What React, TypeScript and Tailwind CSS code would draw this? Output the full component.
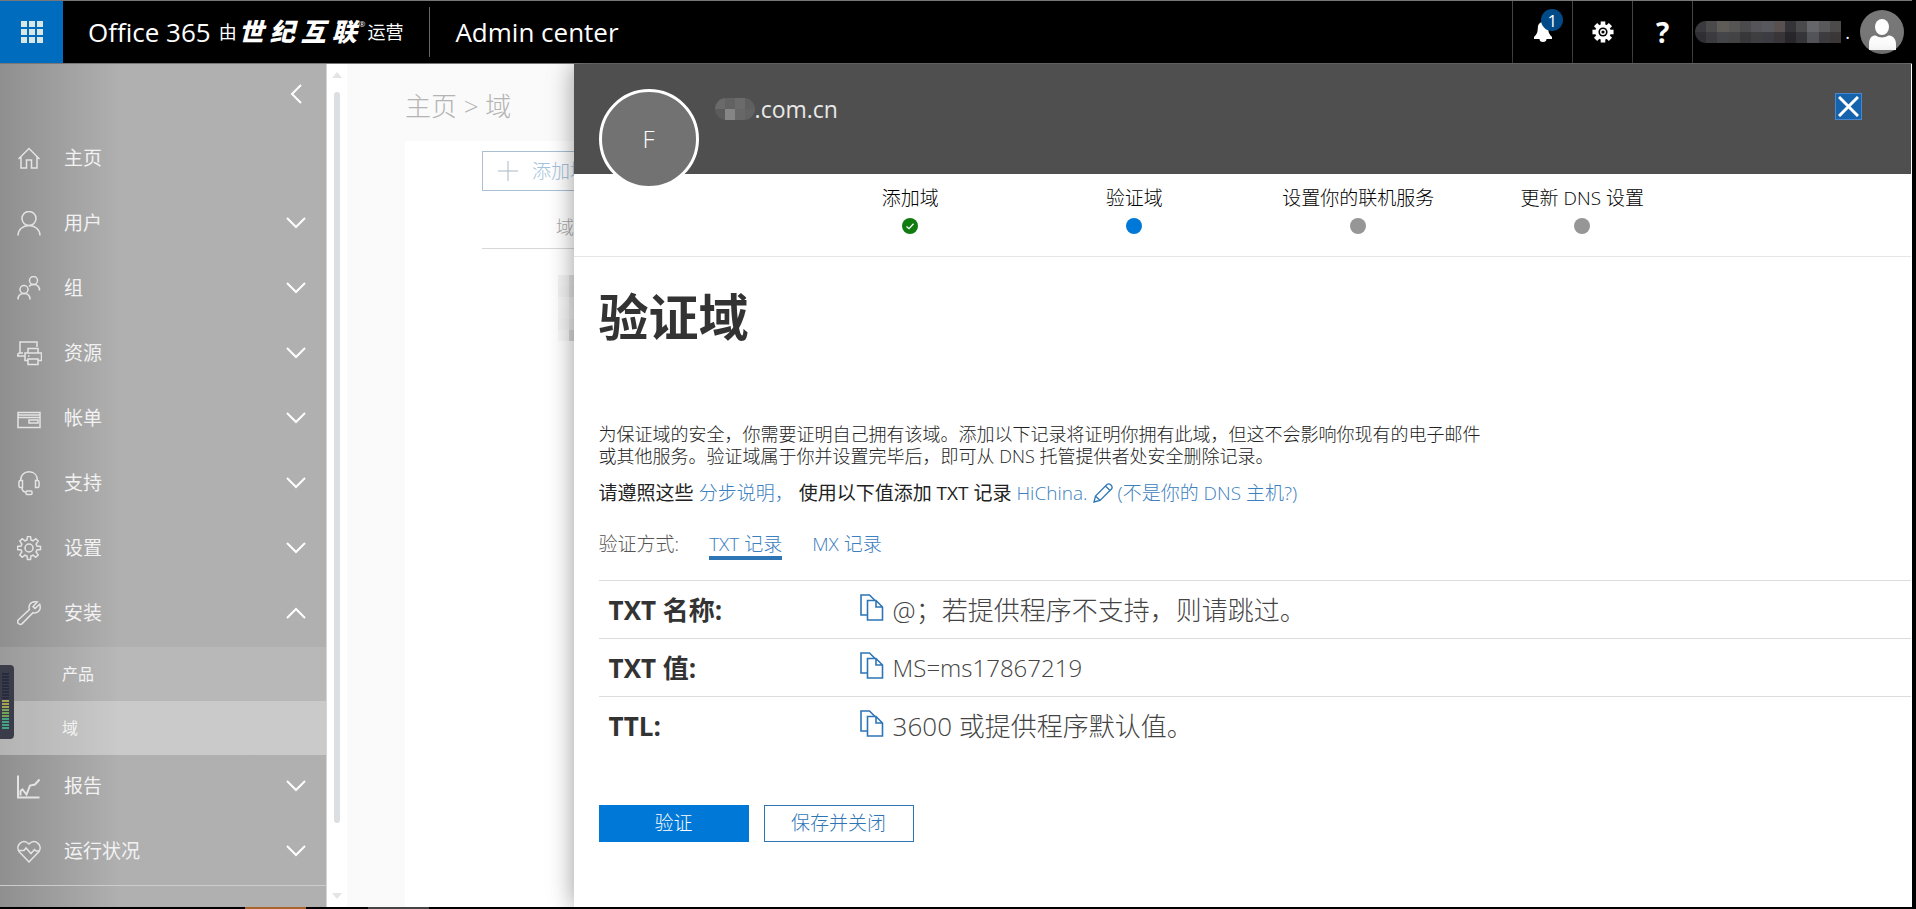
import type { ReactNode } from "react";
import { clsx } from "clsx";

type NavItem = {
  label: string;
  icon: ReactNode;
  expandable?: boolean;
  children?: { label: string; active?: boolean }[];
};

const navItems: NavItem[] = [
  {
    label: "主页",
    icon: <path d="M1.5 13 12 2.5 22.5 13M4 11v11h5.500v-8h5v8H20V11" />,
  },
  {
    label: "用户",
    expandable: true,
    icon: (
      <>
        <circle cx="12" cy="7.500" r="7" />
        <path d="M1 24.500c0-6 5-10 11-10s11 4 11 10" />
      </>
    ),
  },
  {
    label: "组",
    expandable: true,
    icon: (
      <>
        <circle cx="16.500" cy="4.500" r="4" />
        <circle cx="7" cy="13.500" r="4" />
        <path d="M1 23.500c0-4 2.500-6 6-6s6 2 6 6M12 10.500c1-1.500 2.500-2 4.500-2 3.500 0 6 2 6 6" />
      </>
    ),
  },
  {
    label: "资源",
    expandable: true,
    icon: (
      <>
        <path d="M3 12V1h17v5M8 15H0.500c0-2 1-3 2.500-3h3" />
        <path d="M11 12V7.500h10V12M11 19.500H8V12h16.500v7.500H21" />
        <path d="M11 18h10v5.500H11zM11 15h1.500" />
      </>
    ),
  },
  {
    label: "帐单",
    expandable: true,
    icon: <path d="M1 6.500h22v15H1zM1 9h22M1 11.500h22M12 14h9v3h-9z" />,
  },
  {
    label: "支持",
    expandable: true,
    icon: (
      <>
        <path d="M3.500 10C3.500 4 7 0.800 12 0.800S20.500 4 20.500 10M18.500 9.500H21c1.500 0 1.500 7 0 7h-2.500zM5.500 9.500H3c-1.500 0-1.500 7 0 7h2.500zM5 16.500c0 3 1.500 4.500 4 4.500" />
        <rect x="9" y="20" width="6" height="3.500" rx="1" />
      </>
    ),
  },
  {
    label: "设置",
    expandable: true,
    icon: (
      <>
        <path d="m10 4 .5-3.500h3L14 4l2 .8 2.800-2.100 2.400 2.400L19.100 8l.8 2 3.600.5v3l-3.600.5-.8 2 2.100 2.900-2.400 2.400L16 19.200l-2 .8-.5 3.500h-3L10 20l-2-.8-2.800 2.100-2.400-2.400L4.900 16l-.8-2-3.600-.5v-3l3.600-.5.8-2-2.100-2.900 2.400-2.400L8 4.800z" />
        <circle cx="12" cy="12" r="4" />
      </>
    ),
  },
  {
    label: "安装",
    expandable: true,
    icon: (
      <path d="M22.700 3.200 18 7.500 16 5.800 20.300 1C17 .2 12.500 1 12 6c0 1 .1 1.800.4 2.500L1.500 18.800c-2.400 2.700 1 6 3.700 3.800L16 11.700c1 .3 2 .3 3 .1 4-.8 5-5 3.700-8.600z" />
    ),
    children: [{ label: "产品" }, { label: "域", active: true }],
  },
  {
    label: "报告",
    expandable: true,
    icon: <path d="M1 1.500v22h21.500M3.500 21.500V17l2-1.500 4 5 3.500-9 5-1 4.500-5" strokeWidth="2" />,
  },
  {
    label: "运行状况",
    expandable: true,
    icon: (
      <>
        <path d="M12 23 22 12.500C26 6 18 -1 12 5 6-1-2 6 2 12.500z" />
        <path d="M1.500 11.500H7L9 9l5 5.500 3.500-4 1.500 1.500h3.500" />
      </>
    ),
  },
];

const steps = [
  { label: "添加域", state: "done" },
  { label: "验证域", state: "current" },
  { label: "设置你的联机服务", state: "todo" },
  { label: "更新 DNS 设置", state: "todo" },
];

const records = [
  { name: "TXT 名称:", value: "@；若提供程序不支持，则请跳过。" },
  { name: "TXT 值:", value: "MS=ms17867219", code: true },
  { name: "TTL:", value: "3600 或提供程序默认值。" },
];

const accountTiles = [
  ["#3a3a3e", "#4a4a4a", "#5f5c58", "#565554", "#4b4b4d", "#545459", "#57585d", "#585150", "#343337", "#4a4a4d", "#64666a", "#59595c", "#4d4a4a"],
  ["#303034", "#3c3c40", "#454649", "#444444", "#38383a", "#3f3f41", "#3c3c42", "#393539", "#28262b", "#35353a", "#52545a", "#3d3d40", "#3c3838"],
];

const domainTiles = [
  ["#6a6a6a", "#626262", "#6b6b6b", "#5f5f5f"],
  ["#5b5b5b", "#858585", "#676767", "#626262"],
];

const rowTiles = [
  ["#f4f4f4", "#e4e4e4"],
  ["#f2f2f2", "#e2e2e2"],
  ["#f7f7f7", "#ededed"],
  ["#f6f6f6", "#eeeeee"],
  ["#f4f4f4", "#e9e9e9"],
  ["#f8f8f8", "#d8d8d8"],
];

export default function App() {
  return (
    <div className="flex h-screen flex-col overflow-hidden bg-black pr-1 font-['Open_Sans','Noto_Sans_CJK_SC',sans-serif]">
      <TopBar />
      <div className="relative flex min-h-0 flex-1 bg-[#fafafa]">
        <Sidebar />
        <ScrollTrack />
        <DomainList />
        <DomainPanel />
        <LevelMeter />
      </div>
      {/* taskbar edge */}
      <div className="flex h-[2px] shrink-0">
        <div className="ml-[245px] w-[61px] bg-[#a8642a]" />
        <div className="ml-[62px] w-[61px] bg-[#444]" />
      </div>
    </div>
  );
}

function TopBar() {
  return (
    <header className="flex h-16 shrink-0 items-stretch border-y border-[#777] bg-black text-white">
      <button type="button" aria-label="应用启动器" className="flex w-[63px] items-center justify-center bg-[#006cbe]">
        <svg viewBox="0 0 22 22" className="h-[22px] w-[22px] fill-[#d8e6e6]">
          {[0, 8, 16].map((y) =>
            [0, 8, 16].map((x) => <rect key={`${x}-${y}`} x={x} y={y} width="6" height="6" />)
          )}
        </svg>
      </button>
      <div className="flex items-center pl-[25px]">
        <span className="text-[26px]">Office 365</span>
        <span className="ml-2 text-[18px]">由</span>
        <span className="ml-[2px] flex gap-[6px] text-[25px] font-black italic">
          {["世", "纪", "互", "联"].map((c) => (
            <span key={c}>{c}</span>
          ))}
        </span>
        <span className="mb-4 ml-[2px] text-[8px]">®</span>
        <span className="ml-[2px] text-[18px]">运营</span>
      </div>
      <div className="my-[6px] ml-[26px] w-px bg-[#666]" />
      <span className="flex items-center pl-[25px] text-[26px]">Admin center</span>

      <div className="ml-auto flex">
        <button type="button" aria-label="通知" className="relative flex w-[60px] items-center justify-center border-l border-[#444]">
          <svg viewBox="0 0 18 20" className="h-5 w-[18px] fill-white">
            <path d="M9 0C5.500 0 4 2.500 3.800 6 3.600 11 2.500 12.500 0 15v2h18v-2c-2.500-2.500-3.600-4-3.800-9C14 2.500 12.500 0 9 0zM5.500 17a3.500 3 0 0 0 7 0z" />
          </svg>
          <span className="absolute top-2 right-[9px] flex h-[22px] w-[22px] items-center justify-center rounded-full bg-[#004b87] text-[17px] leading-none">
            1
          </span>
        </button>
        <button type="button" aria-label="设置" className="flex w-[60px] items-center justify-center border-l border-[#444]">
          <svg viewBox="0 0 24 24" className="h-[22px] w-[22px]">
            <g className="fill-white">
              {[0, 45, 90, 135].map((a) => (
                <rect key={a} x="9.500" y="0.500" width="5" height="23" transform={`rotate(${a} 12 12)`} />
              ))}
              <circle cx="12" cy="12" r="8.500" />
            </g>
            <circle cx="12" cy="12" r="5" fill="#000" />
            <circle cx="12" cy="12" r="2.500" fill="none" stroke="#fff" strokeWidth="1.500" />
          </svg>
        </button>
        <button type="button" aria-label="帮助" className="flex w-[60px] items-center justify-center border-l border-[#444] text-[28px] font-bold">
          ?
        </button>
        <button type="button" aria-label="帐户" className="flex items-center border-l border-[#444] pr-2 pl-[2px]">
          <span className="overflow-hidden rounded-l-full">
            <Tiles rows={accountTiles} className="h-[22px] w-[146px]" />
          </span>
          <span className="ml-1 text-[18px]">.</span>
          <svg viewBox="0 0 44 44" className="ml-[10px] h-[44px] w-[44px]">
            <circle cx="22" cy="22" r="22" fill="#777" />
            <ellipse cx="22" cy="17" rx="7" ry="8" fill="#fff" />
            <path d="M9 40V34c0-6 3-8.500 6.500-8.500 4 2.500 9 2.500 13 0C32 25.500 36 28 36 34v6z" fill="#fff" />
          </svg>
        </button>
      </div>
    </header>
  );
}

function Sidebar() {
  return (
    <nav className="w-[327px] shrink-0 overflow-hidden border-r border-[#d4d4d4] bg-[#b0b0b0] bg-linear-to-r from-[#8f8f8f] to-[#b0b0b0] to-[120px] text-[19px] text-[#f2f2f2]">
      <div className="flex h-[63px] justify-end pt-5 pr-6">
        <button type="button" aria-label="折叠导航" className="h-5 w-3">
          <svg viewBox="0 0 12 20" className="h-5 w-3 fill-none stroke-white stroke-2">
            <path d="M11 1 2 10l9 9" />
          </svg>
        </button>
      </div>
      <ul>
        {navItems.map((item) => (
          <li key={item.label}>
            <a href="#" className="flex h-[65px] items-center pr-5 pb-[3px] pl-[17px]">
              <svg viewBox="0 0 25 25" className="h-[25px] w-[25px] fill-none stroke-[#e4e4e4] stroke-[1.5px]">
                {item.icon}
              </svg>
              <span className="ml-[22px] flex-1">{item.label}</span>
              {item.expandable && <Chevron up={Boolean(item.children)} />}
            </a>
            {item.children && (
              <ul className="bg-white/10 text-[16px]">
                {item.children.map((child) => (
                  <li key={child.label}>
                    <a
                      href="#"
                      className={clsx("flex h-[54px] items-center pl-[62px]", child.active && "bg-white/25")}
                    >
                      {child.label}
                    </a>
                  </li>
                ))}
              </ul>
            )}
          </li>
        ))}
      </ul>
      <a href="#" className="flex border-t border-[#ccc] pt-[18px] pl-16">
        管理中心
      </a>
    </nav>
  );
}

function Chevron({ up }: { up: boolean }) {
  return (
    <svg viewBox="0 0 20 12" className={clsx("h-3 w-5 fill-none stroke-white stroke-2", up && "rotate-180")}>
      <path d="m1 1 9 9 9-9" />
    </svg>
  );
}

function ScrollTrack() {
  return (
    <div className="flex w-5 shrink-0 flex-col items-center bg-white pt-2 pb-2">
      <svg viewBox="0 0 10 6" className="h-[6px] w-[10px] fill-[#e4e4e4]">
        <path d="M5 0 10 6H0z" />
      </svg>
      <div className="mt-[14px] mb-[70px] w-[6px] flex-1 rounded-full bg-[#dbdfe2]" />
      <svg viewBox="0 0 10 6" className="h-[6px] w-[10px] fill-[#e4e4e4]">
        <path d="M5 6 0 0h10z" />
      </svg>
    </div>
  );
}

function DomainList() {
  return (
    <main className="flex min-w-0 flex-1 flex-col pl-[58px]">
      <p className="flex h-[77px] items-center pt-2 text-[26px] font-light text-[#b4b4b4]">主页 &gt; 域</p>
      <div className="flex-1 bg-white pt-[10px] pl-[77px]">
        <button type="button" className="flex h-10 w-[140px] items-center border border-[#a9bfd3] pl-[15px] text-[19px] font-light whitespace-nowrap text-[#a5c2dc]">
          <svg viewBox="0 0 20 20" className="mr-[14px] h-5 w-5 shrink-0 fill-none stroke-[#a9b9c6]">
            <path d="M10 0v20M0 10h20" />
          </svg>
          添加域
        </button>
        <p className="flex h-[58px] items-center border-b border-[#d8d8d8] pt-4 pl-[74px] text-[18px] font-light text-[#aaa]">
          域
        </p>
        <div className="mt-[26px] ml-[76px] w-[22px]">
          <Tiles rows={rowTiles} className="h-[66px] w-[22px]" />
        </div>
      </div>
    </main>
  );
}

function DomainPanel() {
  return (
    <section className="absolute inset-y-0 right-0 w-[70%] border-r border-white bg-white text-[#222] shadow-[0_0_24px_rgba(0,0,0,0.4)]">
      <div className="flex h-[110px] items-start bg-[#4f4f4f] pl-[25px] text-white">
        <div className="mt-[25px] flex h-[100px] w-[100px] items-center justify-center rounded-full border-3 border-white bg-[#727272] text-[24px] font-light">
          F
        </div>
        <div className="mt-7 ml-4 flex items-center">
          <span className="overflow-hidden rounded-full">
            <Tiles rows={domainTiles} className="h-[22px] w-10" />
          </span>
          <span className="text-[23px] leading-[34px] text-[#e8e8e8]">.com.cn</span>
        </div>
        <button
          type="button"
          aria-label="关闭"
          className="mt-[29px] mr-[49px] ml-auto flex h-[27px] w-[27px] items-center justify-center border border-[#4a86d0] bg-[#1663ad]"
        >
          <svg viewBox="0 0 21 21" className="h-[21px] w-[21px] fill-none stroke-white stroke-3">
            <path d="m1 1 19 19M20 1 1 20" />
          </svg>
        </button>
      </div>

      <ol className="flex justify-center border-b border-[#e6e6e6] pt-3 pb-[22px] pl-2">
        {steps.map((step) => (
          <li key={step.label} className="flex w-56 flex-col items-center gap-2 text-[19px] leading-6 font-light text-black">
            {step.label}
            <StepDot state={step.state} />
          </li>
        ))}
      </ol>

      <div className="pt-[30px] pl-[25px]">
        <h1 className="text-[50px] leading-[60px] font-bold text-[#333]">验证域</h1>
        <p className="mt-[76px] text-[18px] leading-[22px] font-light">
          为保证域的安全，你需要证明自己拥有该域。添加以下记录将证明你拥有此域，但这不会影响你现有的电子邮件
          <br />
          或其他服务。验证域属于你并设置完毕后，即可从 DNS 托管提供者处安全删除记录。
        </p>
        <p className="mt-[14px] flex items-center text-[19px] leading-6 font-light text-[#3c80be]">
          <b className="text-[#222]">请遵照这些</b>
          <a href="#" className="ml-[5px]">分步说明，</a>
          <b className="ml-[5px] text-[#222]">使用以下值添加 TXT 记录</b>
          <a href="#" className="ml-[5px]">HiChina.</a>
          <button type="button" aria-label="编辑" className="ml-[5px]">
            <svg viewBox="0 0 20 20" className="h-5 w-5 fill-none stroke-[#2e75b6] stroke-[1.3px]">
              <path d="m1 19 1.500-6L14 1.500c2.500-2 6.500 2 4.500 4.500L7 17.500zM12.500 3l4.500 4.500M2.500 13 7 17.500" />
            </svg>
          </button>
          <a href="#" className="ml-[5px]">(不是你的 DNS 主机?)</a>
        </p>

        <div className="mt-[27px] flex items-start text-[19px] leading-6 font-light">
          <span className="text-[#555]">验证方式:</span>
          <button type="button" className="ml-[30px] border-b-4 border-[#2e75b6] text-[#3c80be]">TXT 记录</button>
          <button type="button" className="ml-[30px] text-[#3c80be]">MX 记录</button>
        </div>

        <table className="mt-5 w-full text-left text-[26px]">
          <tbody>
            {records.map((r) => (
              <tr key={r.name} className="h-[58px] border-t border-[#ddd]">
                <th scope="row" className="w-[261px] pl-[10px] leading-8 font-bold text-[#333]">{r.name}</th>
                <td className="leading-8 font-light text-[#444]">
                  <div className="flex items-center gap-[9px]">
                    <button type="button" aria-label="复制" className="mb-1">
                      <CopyIcon />
                    </button>
                    <span className={clsx(r.code && "text-[24px]")}>{r.value}</span>
                  </div>
                </td>
              </tr>
            ))}
          </tbody>
        </table>

        <div className="mt-[50px] flex gap-[15px] text-[19px] font-light">
          <button type="button" className="h-[37px] w-[150px] bg-[#0078d7] text-white">验证</button>
          <button type="button" className="h-[37px] w-[150px] border border-[#2e75b6] text-[#2e75b6]">保存并关闭</button>
        </div>
      </div>
    </section>
  );
}

function StepDot({ state }: { state: string }) {
  return (
    <svg viewBox="0 0 16 16" className="h-4 w-4">
      <circle
        cx="8"
        cy="8"
        r="8"
        className={clsx(
          state === "done" && "fill-[#107c10]",
          state === "current" && "fill-[#0078d7]",
          state === "todo" && "fill-[#969696]"
        )}
      />
      {state === "done" && <path d="m4.500 8.500 2.500 2.200 4.500-5" fill="none" stroke="#fff" strokeWidth="1.300" />}
    </svg>
  );
}

function CopyIcon() {
  return (
    <svg viewBox="0 0 24 27" className="h-[27px] w-6 fill-none stroke-[#2e75b6] stroke-[1.6px]">
      <path d="M7 21H1V1h8.500L15 6.500" />
      <path d="M7.500 6.500H16l6.500 6.500v13h-15zM16 6.500V13h6.500" />
    </svg>
  );
}

function Tiles({ rows, className }: { rows: string[][]; className: string }) {
  return (
    <svg
      viewBox={`0 0 ${rows[0].length} ${rows.length}`}
      preserveAspectRatio="none"
      shapeRendering="crispEdges"
      className={clsx("block", className)}
    >
      {rows.map((row, y) =>
        row.map((fill, x) => <rect key={`${x}-${y}`} x={x} y={y} width="1" height="1" fill={fill} />)
      )}
    </svg>
  );
}

/* floating volume meter docked to the left edge */
function LevelMeter() {
  const bars = Array.from({ length: 19 });
  return (
    <div className="absolute bottom-[168px] left-0 h-[74px] w-[14px] rounded-r-[4px] bg-[#3a3d49]">
      <svg viewBox="0 0 14 74" className="h-[74px] w-[14px]">
        {bars.map((_, i) => (
          <rect
            key={i}
            x="2"
            y={8 + i * 3}
            width="7"
            height="2"
            fill={i < 9 ? "#262b3d" : i < 12 ? "#a3a552" : i < 15 ? "#74a358" : "#44a383"}
          />
        ))}
      </svg>
    </div>
  );
}
